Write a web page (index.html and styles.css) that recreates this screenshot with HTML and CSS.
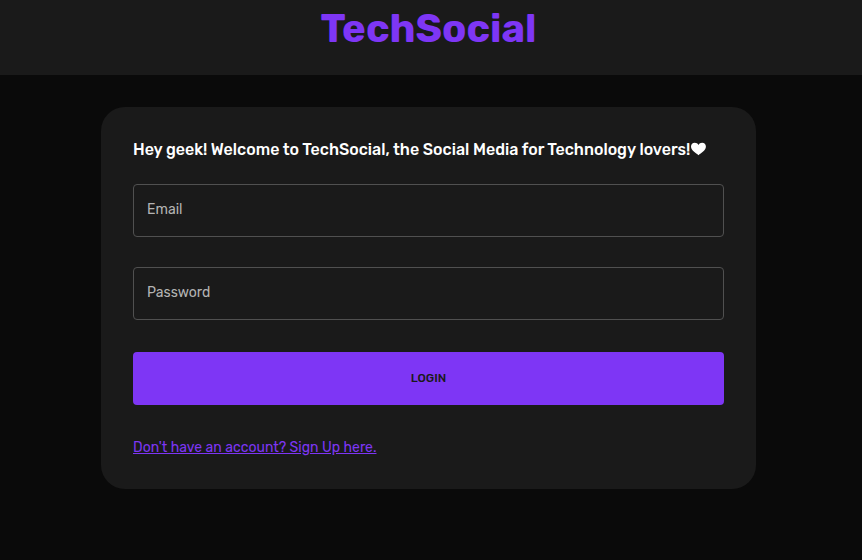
FILE: index.html
```html
<!DOCTYPE html>
<html lang="en">
<head>
<meta charset="utf-8">
<meta name="viewport" content="width=device-width, initial-scale=1">
<title>TechSocial</title>
<link rel="stylesheet" href="styles.css">
</head>
<body>
<header class="topbar">
  <h1 class="brand">TechSocial</h1>
</header>
<main class="page">
  <section class="card">
    <h2 class="welcome">Hey geek! Welcome to TechSocial, the Social Media for Technology lovers!<svg class="heart" viewBox="0 0 16 14" aria-hidden="true"><path d="M8.500 13.200C6 11.300 1 8.600 1 4.600C1 2.400 2.600 .7 4.800 .7C6.500 .7 7.800 1.600 8.500 3C9.200 1.600 10.500 .7 12.100 .7C14.300 .7 15.900 2.400 15.900 4.600C15.900 8.600 11 11.300 8.500 13.200Z"/></svg></h2>
    <form class="form">
      <div class="field">
        <label class="field-label" for="email">Email</label>
        <input class="field-input" id="email" type="email" name="email">
      </div>
      <div class="field">
        <label class="field-label" for="password">Password</label>
        <input class="field-input" id="password" type="password" name="password">
      </div>
      <button class="login" type="submit">LOGIN</button>
    </form>
    <a class="signup" href="#signup">Don't have an account? Sign Up here.</a>
  </section>
</main>
</body>
</html>
```

FILE: styles.css
```css
* {
  box-sizing: border-box;
}

body {
  margin: 0;
  background: #0a0a0a;
  color: #fff;
  font-family: Rubik, Roboto, sans-serif;
  font-size: 14px;
  line-height: 20px;
}

.topbar {
  padding: 5px 5px 22px 0;
  background: #1a1a1a;
  text-align: center;
}

.brand {
  margin: 0;
  color: #7e36f5;
  font-size: 40px;
  font-weight: 700;
  line-height: 48px;
}

.page {
  padding: 32px 5px 32px 0;
}

.card {
  width: 90%;
  max-width: 655px;
  margin: 0 auto;
  padding: 32px;
  border-radius: 24px;
  background: #1a1a1a;
}

.welcome {
  margin: 0 0 24px;
  font-size: 16px;
  font-weight: 500;
  line-height: 21px;
}

.heart {
  width: 16px;
  height: 14px;
  vertical-align: -1px;
  fill: #fff;
}

.form {
  display: grid;
  gap: 30px;
}

.field {
  display: grid;
}

.field-label,
.field-input {
  grid-area: 1 / 1;
}

.field-label {
  padding: 16px 14px;
  color: #b3b3b3;
  pointer-events: none;
}

.field-input {
  width: 100%;
  height: 53px;
  padding: 0 14px;
  border: 1px solid #505050;
  border-radius: 4px;
  background: transparent;
  color: #fff;
  font: inherit;
}

.login {
  height: 53px;
  margin: 2px 0 33px;
  padding: 0 0 2px;
  border: 0;
  border-radius: 4px;
  background: #7e36f5;
  color: #1a1a1a;
  font: inherit;
  font-size: 12px;
  font-weight: 500;
}

.signup {
  display: block;
  width: fit-content;
  margin-bottom: -1px;
  color: #7e36f5;
  text-decoration: underline;
}
```
